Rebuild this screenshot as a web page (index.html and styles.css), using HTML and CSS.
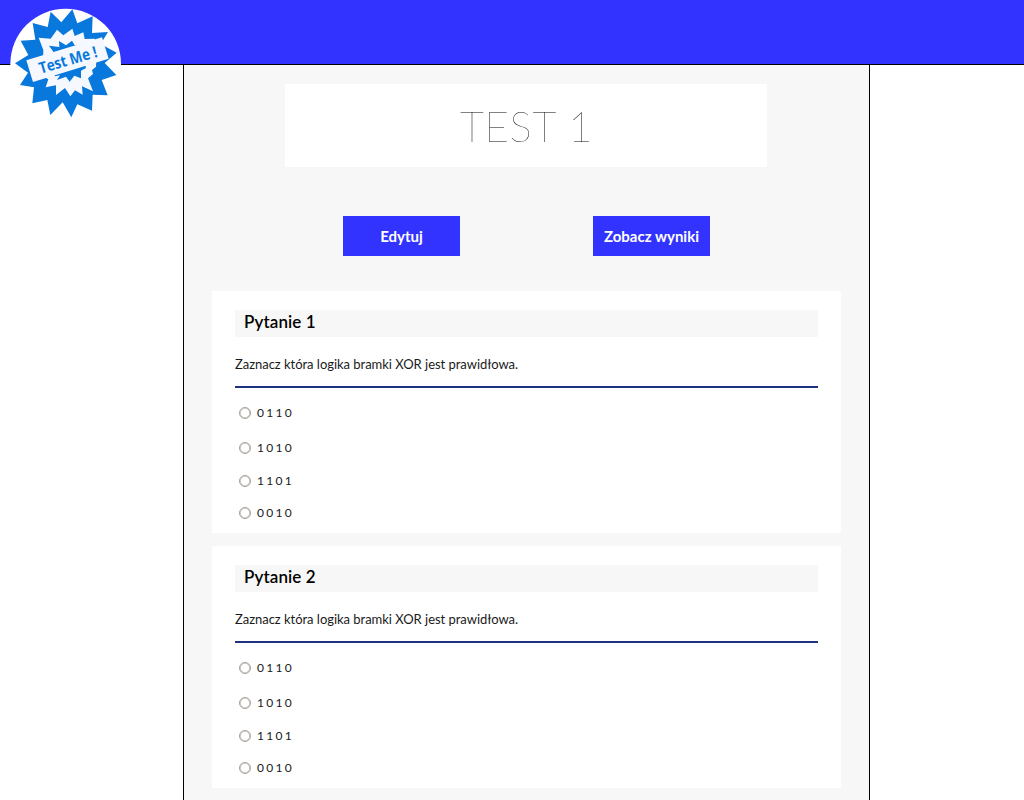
FILE: index.html
```
<!DOCTYPE html>
<html lang="pl">
<head>
<meta charset="utf-8">
<title>Test 1</title>
<link rel="stylesheet" href="styles.css">
</head>
<body>
<header class="topbar">
  <svg class="logo" viewBox="0 0 390 390" width="130" height="130">
    <circle cx="197" cy="192" r="166" fill="#fff"/>
    <path fill="#0878dc" d="M152 35L184 67L217 28L232 70L278 49L276 99L324 96L302 132L350 158L314 189L349 225L305 240L323 286L278 284L276 332L232 313L214 352L188 307L151 345L142 300L97 310L102 262L60 255L84 218L45 190L85 165L62 122L106 119L98 69L143 81Z"/>
    <path fill="#f5f9ff" d="M171 89L190 106L217 86L224 108L250 97L254 117L284 116L290 150L288 200L276 210L279 222L264 235L279 274L246 259L248 284L225 271L211 289L195 264L168 285L168 256L137 262L145 238L128 228L130 150L116 113L152 116Z"/>
    <path fill="#0878dc" d="M147 137L178 141L177 123L198 136L216 122L224 136L248 134L246 150L250 160L258 204L243 212L243 235L223 227L209 245L198 230L171 240L180 226L165 229L150 200L160 155Z"/>
    <path fill="#f5f9ff" d="M79 181L306 112L326 176L99 246Z"/>
    <text class="logo-text" x="122" y="221" textLength="180" lengthAdjust="spacingAndGlyphs" transform="rotate(-16.4 122 221)">Test Me !</text>
  </svg>
</header>
<main class="page">
  <h1 class="title"><span class="title-text">TEST 1</span></h1>
  <nav class="actions">
    <a class="button">Edytuj</a>
    <a class="button">Zobacz wyniki</a>
  </nav>
  <section class="question">
    <h2 class="heading">Pytanie 1</h2>
    <p class="prompt">Zaznacz która logika bramki XOR jest prawidłowa.</p>
    <ul class="answers">
      <li class="answer"><span class="radio"></span><span class="value">0110</span></li>
      <li class="answer"><span class="radio"></span><span class="value">1010</span></li>
      <li class="answer"><span class="radio"></span><span class="value">1101</span></li>
      <li class="answer"><span class="radio"></span><span class="value">0010</span></li>
    </ul>
  </section>
  <section class="question">
    <h2 class="heading">Pytanie 2</h2>
    <p class="prompt">Zaznacz która logika bramki XOR jest prawidłowa.</p>
    <ul class="answers">
      <li class="answer"><span class="radio"></span><span class="value">0110</span></li>
      <li class="answer"><span class="radio"></span><span class="value">1010</span></li>
      <li class="answer"><span class="radio"></span><span class="value">1101</span></li>
      <li class="answer"><span class="radio"></span><span class="value">0010</span></li>
    </ul>
  </section>
</main>
</body>
</html>
```
FILE: styles.css
```
* { box-sizing: border-box; }
body { margin: 0; height: 800px; overflow: hidden; display: flex; flex-direction: column; background: #fff; color: #000; font-family: Lato, sans-serif; }
.topbar { position: relative; z-index: 1; flex: none; height: 65px; background: #3333ff; border-bottom: 1px solid #000; }
.logo { position: absolute; left: 0; top: 0; }
.logo-text { font: bold 47px "Open Sans", "DejaVu Sans", sans-serif; fill: #0878dc; }
.page { flex: 1; width: 687px; margin-left: 183px; padding: 19px 28px 0; border: solid #000; border-width: 0 1px; background: #f7f7f7; }
.title { width: 482px; height: 83px; margin: 0 0 0 73px; padding-left: 2px; background: #fff; text-align: center; font-size: 42px; font-weight: 100; line-height: 84px; letter-spacing: 0.6px; }
.title-text { display: inline-block; will-change: transform; }
.actions { display: flex; gap: 133px; margin: 49px 0 35px 131px; }
.button { width: 117px; height: 40px; background: #3333ff; color: #fff; font-size: 15px; font-weight: bold; line-height: 41px; text-align: center; white-space: nowrap; }
.question { width: 629px; height: 242px; margin-bottom: 13px; padding: 19px 23px 0; background: #fff; }
.heading { height: 27px; margin: 0; padding-left: 9px; background: #f7f7f7; font-size: 17px; font-weight: 600; line-height: 24px; letter-spacing: 0.1px; }
.prompt { height: 51px; margin: 0; padding-top: 17px; border-bottom: 2px solid #1e3280; color: #1a1a1a; font-size: 13px; line-height: 20px; letter-spacing: -0.03px; white-space: nowrap; }
.answers { margin: 0; padding: 15px 0 0 4px; list-style: none; }
.answer { display: flex; align-items: center; gap: 6px; height: 20px; margin-bottom: 13px; color: #1a1a1a; font-size: 12px; letter-spacing: 2.3px; }
.answer:first-child { margin-bottom: 15px; }
.answer:nth-child(3) { margin-bottom: 12px; }
.value { padding-bottom: 2px; }
.radio { width: 12px; height: 12px; border: 1px solid #aaa198; border-radius: 50%; background: #fff; box-shadow: inset 0 0 0 0.6px #b8b0a8; }
```
